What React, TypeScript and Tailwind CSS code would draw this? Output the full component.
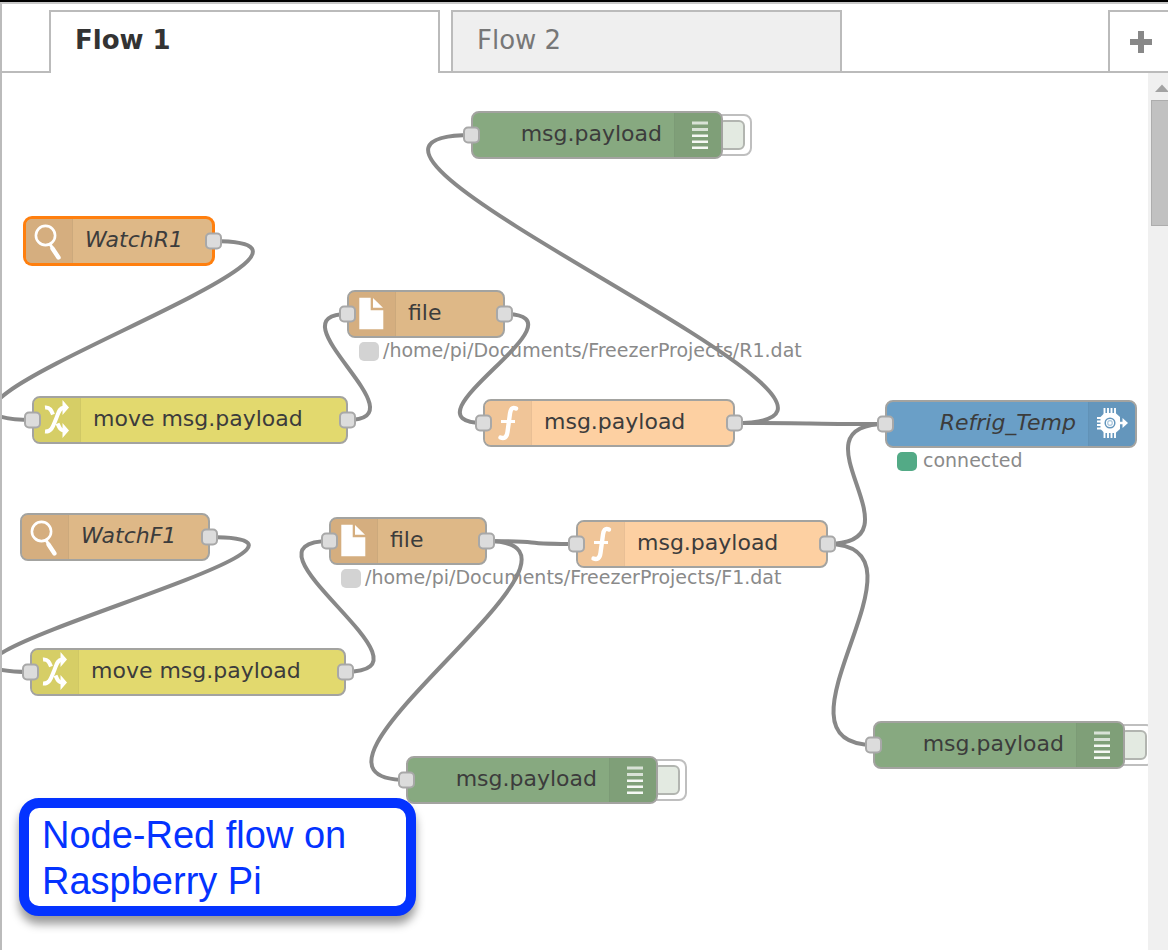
import React from "react";

type Kind = "watch" | "file" | "change" | "function" | "debug" | "device";

interface FlowNode {
  id: string;
  kind: Kind;
  label: string;
  x: number;
  y: number;
  w: number;
  italic?: boolean;
  selected?: boolean;
  hasInput?: boolean;
  hasOutput?: boolean;
  status?: { text: string; color: string; gap: string };
}

const NODE_HEIGHT = 48;
const GREY = "bg-[#d3d3d3]";

const nodes: FlowNode[] = [
  { id: "debugR", kind: "debug", label: "msg.payload", x: 469, y: 38, w: 252, hasInput: true },
  { id: "watchR", kind: "watch", label: "WatchR1", x: 22, y: 144, w: 190, italic: true, selected: true, hasOutput: true },
  {
    id: "fileR", kind: "file", label: "file", x: 345, y: 217, w: 158, hasInput: true, hasOutput: true,
    status: { text: "/home/pi/Documents/FreezerProjects/R1.dat", color: GREY, gap: "gap-1" },
  },
  { id: "moveR", kind: "change", label: "move msg.payload", x: 30, y: 323, w: 316, hasInput: true, hasOutput: true },
  { id: "funcR", kind: "function", label: "msg.payload", x: 481, y: 326, w: 252, hasInput: true, hasOutput: true },
  {
    id: "refrig", kind: "device", label: "Refrig_Temp", x: 883, y: 327, w: 252, italic: true, hasInput: true,
    status: { text: "connected", color: "bg-[#53aa86]", gap: "gap-1.5" },
  },
  { id: "watchF", kind: "watch", label: "WatchF1", x: 18, y: 440, w: 190, italic: true, hasOutput: true },
  {
    id: "fileF", kind: "file", label: "file", x: 327, y: 444, w: 158, hasInput: true, hasOutput: true,
    status: { text: "/home/pi/Documents/FreezerProjects/F1.dat", color: GREY, gap: "gap-1" },
  },
  { id: "funcF", kind: "function", label: "msg.payload", x: 574, y: 447, w: 252, hasInput: true, hasOutput: true },
  { id: "moveF", kind: "change", label: "move msg.payload", x: 28, y: 575, w: 316, hasInput: true, hasOutput: true },
  { id: "debugF", kind: "debug", label: "msg.payload", x: 404, y: 683, w: 252, hasInput: true },
  { id: "debugF2", kind: "debug", label: "msg.payload", x: 871, y: 648, w: 252, hasInput: true },
];

const wires: [string, string][] = [
  ["watchR", "moveR"],
  ["moveR", "fileR"],
  ["fileR", "funcR"],
  ["funcR", "debugR"],
  ["funcR", "refrig"],
  ["watchF", "moveF"],
  ["moveF", "fileF"],
  ["fileF", "funcF"],
  ["fileF", "debugF"],
  ["funcF", "refrig"],
  ["funcF", "debugF2"],
];

const fills: Record<Kind, string> = {
  watch: "bg-[#deb887]",
  file: "bg-[#deb887]",
  change: "bg-[#e2d96e]",
  function: "bg-[#fdd0a2]",
  debug: "bg-[#87a980]",
  device: "bg-[#6a9fc7]",
};

const iconFills: Record<Kind, string> = {
  watch: "bg-[#d5ae7f]",
  file: "bg-[#d5ae7f]",
  change: "bg-[#d6ce66]",
  function: "bg-[#f0c598]",
  debug: "bg-[#7f9f78]",
  device: "bg-[#6496bc]",
};

// Bezier between an output port and an input port; links running backwards bulge further out.
function wirePath(fromId: string, toId: string) {
  const from = nodes.find((n) => n.id === fromId)!;
  const to = nodes.find((n) => n.id === toId)!;
  const reach = 157;
  const rise = 47;
  const x1 = from.x + from.w - 1;
  const y1 = from.y + NODE_HEIGHT / 2;
  const x2 = to.x + 1;
  const y2 = to.y + NODE_HEIGHT / 2;
  const dx = x2 - x1;
  const dy = y2 - y1;
  const distance = Math.hypot(dx, dy);
  let scale = distance < reach ? 0.75 - 0.75 * ((reach - distance) / reach) : 0.75;
  let scaleY = 0;
  if (dx < 0) {
    scale += 2 * (Math.min(5 * reach, -dx) / (5 * reach));
    if (Math.abs(dy) < 3 * rise) {
      scaleY = (dy > 0 ? 0.5 : -0.5) * ((3 * rise - Math.abs(dy)) / (3 * rise)) * (Math.min(reach, -dx) / reach);
    }
  }
  return `M${x1} ${y1}C${x1 + scale * reach} ${y1 + scaleY * rise} ${x2 - scale * reach} ${y2 - scaleY * rise} ${x2} ${y2}`;
}

function NodeIcon({ kind }: { kind: Kind }) {
  const common = { className: "h-full w-full", fill: "none", stroke: "white", "aria-hidden": true } as const;
  switch (kind) {
    case "watch":
      return (
        <svg viewBox="2 2 46 44" {...common}>
          <circle cx="21.5" cy="18.5" r="9.6" strokeWidth="2.6" />
          <path d="M26 27l3 5" strokeWidth="3" />
          <path d="M28.5 31.5l6 9" strokeWidth="4.4" strokeLinecap="round" />
        </svg>
      );
    case "file":
      return (
        <svg viewBox="2 2 46 44" {...common}>
          <path d="M12.3 7.7h11.4v12.6h12.6v19H12.3z" fill="white" stroke="none" />
          <path d="M26 8l10 9.8H26z" fill="white" stroke="none" />
        </svg>
      );
    case "change":
      return (
        <svg viewBox="2 2 46 44" {...common} strokeWidth="4">
          <path d="M13 35.5C20 36 21.5 29 24 23S27 12 32 11.5" />
          <path d="M13 11.5c5-.5 6.500 3 8 7" />
          <path d="M25.5 27.500c2 4.500 3 7 6.500 7" />
          <path d="M30.5 4l6.500 7.500-6.500 7.500zM30.5 27l6.500 7.500-6.500 7.500z" fill="white" stroke="none" />
        </svg>
      );
    case "function":
      return (
        <svg viewBox="2 2 46 44" {...common} strokeWidth="4.4" strokeLinecap="round">
          <path d="M33 9.500C29 7.500 27.600 10.500 27 14.500L24.500 33c-.7 5.500-3.500 7-7 5.500" />
          <path d="M18 22.500h14" strokeWidth="3.200" strokeLinecap="butt" />
        </svg>
      );
    case "debug":
      return (
        <svg viewBox="0 2 46 44" {...common} stroke="none">
          <g fill="white">
            <path d="M17 10.500h16v3H17zM17 17h16v3H17z" opacity=".7" />
            <path d="M17 23.500h16v2.500H17zM17 29.500h16v2.500H17zM17 35.500h16v2.500H17z" opacity=".92" />
          </g>
        </svg>
      );
    case "device":
      return (
        <svg viewBox="0 2 46 44" {...common}>
          <path d="M15.500 8v30M19 8v30M22.500 8v30M26 8v30M8 18h12M8 21.500h12M8 25h12M8 28.500h12" strokeWidth="1.900" />
          <path d="M15.500 13h11l4.500 4v12l-4.500 4h-11l-4-4V17z" fill="white" stroke="none" />
          <circle cx="21" cy="23" r="4.800" stroke="#6496bc" strokeWidth="1.500" />
          <circle cx="21" cy="23" r="2.300" stroke="#a9c6dc" strokeWidth="1.200" />
          <path d="M30 23h5" strokeWidth="2.400" />
          <path d="M33.500 18l5.500 5-5.500 5z" fill="white" stroke="none" />
        </svg>
      );
  }
}

function Port({ side }: { side: "left" | "right" }) {
  const place = side === "left" ? "-left-2.5" : "-right-2.5";
  return (
    <span
      className={`absolute top-1/2 h-[17px] w-[17px] -translate-y-1/2 rounded-[5px] border-2 border-[#a8a8a8] bg-[#dcdcdc] ${place}`}
    />
  );
}

function NodeView({ node }: { node: FlowNode }) {
  const iconRight = node.kind === "debug" || node.kind === "device";
  const outline = node.selected ? "border-[#ff7f0e] ring-1 ring-[#ff7f0e]" : "border-[#a3a3a0]";
  return (
    <div className="absolute" style={{ left: node.x, top: node.y, width: node.w }}>
      {node.kind === "debug" && (
        <button
          type="button"
          aria-label="Toggle debug output"
          className="absolute -right-[29px] top-[3px] h-[42px] w-10 rounded-lg border-2 border-[#bfbfbf] bg-white p-1 pr-[5px]"
        >
          <span className="block h-full rounded-md border-2 border-[#b2b5b0] bg-[#e3eae1]" />
        </button>
      )}
      <div className={`relative flex h-12 rounded-lg border-2 ${fills[node.kind]} ${outline}`}>
        <div className={`flex flex-1 overflow-hidden rounded-md ${iconRight ? "flex-row-reverse" : ""}`}>
          <span
            className={`w-[46px] shrink-0 ${iconFills[node.kind]} ${iconRight ? "shadow-[-1px_0_0_rgba(0,0,0,0.08)]" : "shadow-[1px_0_0_rgba(0,0,0,0.08)]"}`}
          >
            <NodeIcon kind={node.kind} />
          </span>
          <span
            className={`px-[13px] text-[22px] leading-[42px] whitespace-nowrap text-[#3c3c3c] ${node.italic ? "italic" : ""}`}
          >
            {node.label}
          </span>
        </div>
        {node.hasInput && <Port side="left" />}
        {node.hasOutput && <Port side="right" />}
      </div>
      {node.status && (
        <div className={`flex h-6 items-center pl-3 ${node.status.gap}`}>
          <span className={`mt-0.5 h-[19px] w-5 shrink-0 rounded-[5px] ${node.status.color}`} />
          <span className="text-[19px] leading-6 whitespace-nowrap text-[#8a8a8a]">{node.status.text}</span>
        </div>
      )}
    </div>
  );
}

export default function App() {
  return (
    <div className="flex min-h-screen flex-col border-t-2 border-black bg-white font-['DejaVu_Sans',sans-serif]">
      <div className="flex flex-1 flex-col border-t-2 border-l-2 border-t-[#c8c8c8] border-l-[#bbbbbb]">
        <header className="flex h-[69px] pt-1.5">
          <div className="w-[47px] shrink-0 border-b-2 border-[#bbbbbb]" />
          <div role="tablist" aria-label="Flows" className="flex min-w-0 flex-1">
            <button
              type="button"
              role="tab"
              aria-selected="true"
              className="w-[391px] min-w-0 border-2 border-b-0 border-[#bbbbbb] px-6 pb-1.5 text-left text-[26px] leading-8 font-bold text-[#333333]"
            >
              Flow 1
            </button>
            <div className="w-[11px] shrink-0 border-b-2 border-[#bbbbbb]" />
            <button
              type="button"
              role="tab"
              aria-selected="false"
              className="w-[391px] min-w-0 border-2 border-[#bbbbbb] bg-[#efefef] px-6 pb-1 text-left text-[26px] leading-8 text-[#777777]"
            >
              Flow 2
            </button>
            <div className="min-w-0 flex-1 border-b-2 border-[#bbbbbb]" />
          </div>
          <button
            type="button"
            aria-label="Add flow"
            className="flex w-[60px] shrink-0 items-center justify-center border-t-2 border-b-2 border-l-2 border-[#bbbbbb]"
          >
            <svg viewBox="0 0 24 24" className="ml-1 h-6 w-6" fill="#888888" aria-hidden="true">
              <path d="M9 1h6v8h8v6h-8v8H9v-8H1V9h8z" />
            </svg>
          </button>
        </header>

        <div className="flex flex-1">
          <main className="relative min-w-0 flex-1 overflow-hidden">
            <svg className="absolute inset-0 h-full w-full" fill="none" stroke="#888888" strokeWidth="4" aria-hidden="true">
              {wires.map(([from, to]) => (
                <path key={`${from}-${to}`} d={wirePath(from, to)} />
              ))}
            </svg>
            {nodes.map((node) => (
              <NodeView key={node.id} node={node} />
            ))}
            <p className="absolute top-[725px] left-[17px] w-[397px] rounded-[20px] border-[10px] border-[#0433ff] bg-white px-[13px] pt-1 pb-0.5 font-['Liberation_Sans',Arial,sans-serif] text-[38px] leading-[46px] text-[#0433ff] shadow-[0_8px_10px_rgba(0,0,0,0.4)]">
              Node-Red flow on Raspberry Pi
            </p>
          </main>
          <div className="flex w-5 shrink-0 flex-col items-end overflow-hidden bg-[#f0f0f0]" aria-hidden="true">
            <svg viewBox="0 0 13 27" className="h-[27px] w-[13px]" fill="#a3a3a3">
              <path d="M0 19L7 11.500L14 19z" />
            </svg>
            <div className="h-[126px] w-[17px] border border-r-0 border-[#adadad] bg-[#c1c1c1]" />
          </div>
        </div>
      </div>
    </div>
  );
}
